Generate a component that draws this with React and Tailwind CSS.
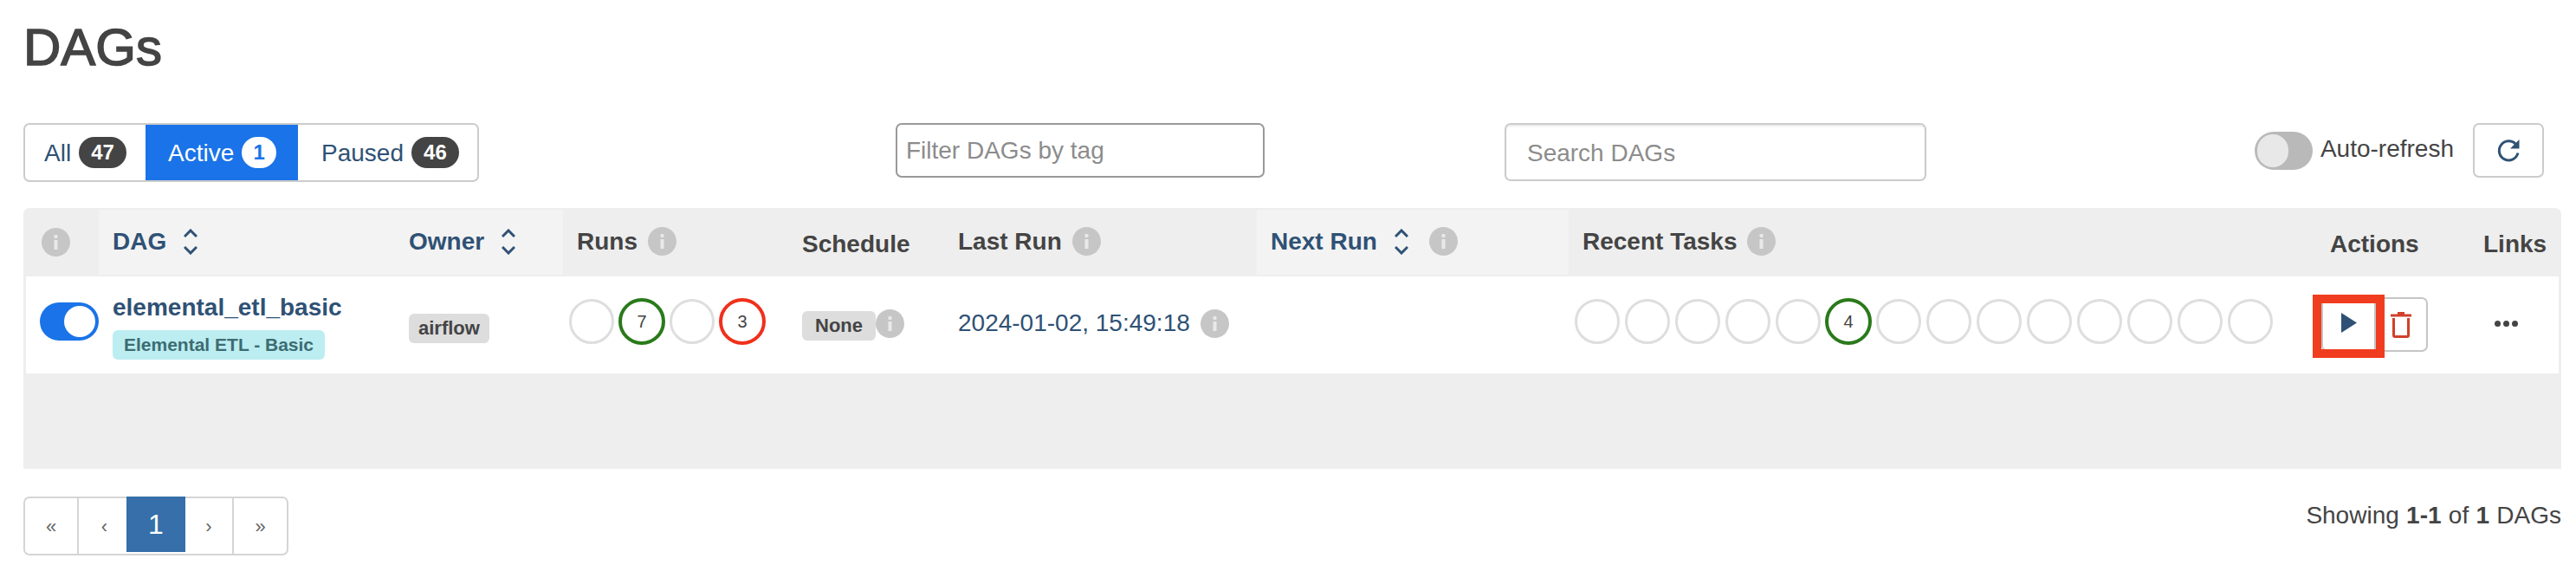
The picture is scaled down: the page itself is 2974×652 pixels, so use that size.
import React from 'react';

const sans = "font-['Liberation_Sans',Arial,sans-serif]";

function InfoIcon({ className = '' }) {
  return (
    <svg viewBox="0 0 33 33" className={`w-[33px] h-[33px] shrink-0 ${className}`}>
      <circle cx="16.5" cy="16.5" r="16.5" fill="#c6c6c6" />
      <rect x="14.5" y="14" width="4" height="11" fill="#e9e9e9" />
      <rect x="14.5" y="8" width="4" height="4" rx="1" fill="#e9e9e9" />
    </svg>
  );
}

function SortIcon() {
  return (
    <svg viewBox="0 0 16 30" className="w-[16px] h-[30px] shrink-0" fill="none" stroke="#2f5175" strokeWidth="3">
      <path d="M1 9l7-7 7 7" />
      <path d="M1 21l7 7 7-7" />
    </svg>
  );
}

function Circle({ value, tone, className = '' }) {
  if (tone === 'green' || tone === 'red') {
    return (
      <div className={`w-[54px] h-[54px] rounded-full border-[4px] flex items-center justify-center text-[20px] text-[#444] bg-white ${tone === 'green' ? 'border-[#2a7a1b]' : 'border-[#f0301c]'} ${className}`}>
        {value}
      </div>
    );
  }
  return <div className={`w-[52px] h-[52px] rounded-full border-[3px] border-[#dedede] bg-white ${className}`} />;
}

function Tab({ label, count, active, className = '' }) {
  return (
    <div className={`flex items-center gap-[9px] h-full ${active ? 'bg-[#1a73e8] text-white' : 'text-[#2f5175]'} ${className}`}>
      <span className="pt-[2px]">{label}</span>
      <span className={`h-[36px] rounded-[18px] flex items-center justify-center text-[24px] font-bold ${active ? 'bg-white text-[#1a73e8] w-[40px]' : 'bg-[#444] text-white w-[55px]'}`}>
        {count}
      </span>
    </div>
  );
}

function PageCell({ children, className = '' }) {
  return <div className={`h-full flex items-center justify-center text-[#666] ${className}`}>{children}</div>;
}

const columns = 'grid grid-cols-[84px_342px_194px_260px_180px_361px_360px_863px_177px_103px]';

export default function App() {
  const tasks = ['', '', '', '', '', '4', '', '', '', '', '', '', '', ''];

  return (
    <div className={`${sans} w-[2974px] h-[652px] bg-white text-[#444] text-[28px] overflow-hidden`}>
      <h1 className="pl-[27px] pt-[25px] h-[142px] text-[60px] leading-[60px] font-normal [-webkit-text-stroke:1.5px_#444]">DAGs</h1>

      {/* Filters */}
      <div className="flex items-start pl-[27px] pr-[37px] h-[98px]">
        <div className="flex items-center w-[526px] h-[68px] border-2 border-[#ccc] rounded-[7px] relative">
          <Tab label="All" count="47" className="w-[141px] pl-[24px] -ml-[2px] rounded-l-[7px]" />
          <Tab label="Active" count="1" active className="w-[176px] pl-[26px] h-[68px]" />
          <Tab label="Paused" count="46" className="pl-[27px]" />
        </div>
        <div className="ml-[481px] w-[426px] h-[63px] border-2 border-[#999] rounded-[7px] flex items-center pl-[10px] text-[#8c8c8c]">
          Filter DAGs by tag
        </div>
        <div className="ml-[277px] w-[487px] h-[67px] border-2 border-[#ccc] rounded-[7px] shadow-[inset_0_2px_2px_rgba(0,0,0,0.08)] flex items-center pl-[24px] pt-[2px] text-[#8c8c8c]">
          Search DAGs
        </div>
        <div className="ml-[379px] w-[67px] h-[44px] mt-[10px] rounded-full bg-[#b9b9b9] flex items-center pl-[3px]">
          <div className="w-[36px] h-[38px] rounded-full bg-[#e8e8e8]" />
        </div>
        <span className="ml-[9px] mt-[12px] leading-[36px]">Auto-refresh</span>
        <div className="ml-[22px] w-[82px] h-[63px] border-2 border-[#ccc] rounded-[7px] flex items-center justify-center">
          <svg viewBox="0 0 28 28" className="w-[28px] h-[28px]" fill="none">
            <path d="M22.5 6.5A11 11 0 1 0 25 16.5" stroke="#2f5175" strokeWidth="3" />
            <path d="M16 11.5L26.5 11.5L26.5 1z" fill="#2f5175" />
          </svg>
        </div>
      </div>

      {/* Table */}
      <div className="ml-[27px] w-[2930px] h-[301px] bg-[#eee] rounded-t-[7px] px-[3px]">
        <div className={`${columns} h-[79px] font-bold`}>
          <div className="flex items-center pl-[18px]"><InfoIcon /></div>
          <div className="flex items-center gap-[20px] pl-[16px] pb-[2px] my-[2px] bg-[#f3f3f3] text-[#2f5175]">DAG <SortIcon /></div>
          <div className="flex items-center gap-[20px] pl-[16px] pb-[2px] my-[2px] bg-[#f3f3f3] text-[#2f5175]">Owner <SortIcon /></div>
          <div className="flex items-center gap-[12px] pl-[16px] pb-[2px]">Runs <InfoIcon /></div>
          <div className="flex items-center pl-[16px] pt-[4px]">Schedule</div>
          <div className="flex items-center gap-[12px] pl-[16px] pb-[2px]">Last Run <InfoIcon /></div>
          <div className="flex items-center gap-[20px] pl-[16px] pb-[2px] my-[2px] bg-[#f3f3f3] text-[#2f5175]">Next Run <SortIcon /><span className="ml-[4px]"><InfoIcon /></span></div>
          <div className="flex items-center gap-[12px] pl-[16px] pb-[2px]">Recent Tasks <InfoIcon /></div>
          <div className="flex items-center pl-[16px] pt-[4px]">Actions</div>
          <div className="flex items-center pl-[16px] pt-[4px]">Links</div>
        </div>

        <div className={`${columns} h-[112px] bg-white`}>
          <div className="flex items-center pl-[16px] pb-[9px]">
            <div className="w-[68px] h-[44px] rounded-full bg-[#1a73e8] flex items-center justify-end pr-[4px]">
              <div className="w-[36px] h-[36px] rounded-full bg-white" />
            </div>
          </div>
          <div className="pl-[16px] pt-[18px]">
            <div className="font-bold text-[#2f5175] leading-[36px]">elemental_etl_basic</div>
            <span className="inline-block mt-[8px] h-[34px] px-[13px] rounded-[6px] bg-[#bcedf1] text-[#3c6c72] text-[21px] font-bold leading-[34px]">Elemental ETL - Basic</span>
          </div>
          <div className="pl-[16px] pt-[37px]">
            <span className="inline-block h-[34px] px-[11px] rounded-[6px] bg-[#ddd] text-[22px] font-bold leading-[34px]">airflow</span>
          </div>
          <div className="flex items-center gap-[5px] pl-[7px] pb-[8px]">
            <Circle />
            <Circle value="7" tone="green" />
            <Circle />
            <Circle value="3" tone="red" />
          </div>
          <div className="flex items-start pl-[16px] pt-[40px]">
            <span className="h-[34px] px-[15px] rounded-[6px] bg-[#ddd] text-[22px] font-bold leading-[34px]">None</span>
            <InfoIcon className="-mt-[2px]" />
          </div>
          <div className="flex items-center gap-[12px] pl-[16px] pb-[4px] text-[#2f5175]">
            2024-01-02, 15:49:18 <InfoIcon />
          </div>
          <div />
          <div className="flex items-center gap-[6px] pl-[7px] pb-[8px]">
            {tasks.map((t, i) => (
              <Circle key={i} value={t} tone={t ? 'green' : undefined} className={t ? '-mx-[1px]' : ''} />
            ))}
          </div>
          <div className="flex items-start pl-[6px] pt-[24px] relative">
            <div className="w-[63px] h-[63px] border-2 border-[#c5c5c5] rounded-l-[7px] flex items-center justify-center">
              <svg viewBox="0 0 18 23" className="w-[18px] h-[23px] -mt-[4px]"><path d="M0 0l18 11.5L0 23z" fill="#2f5175" /></svg>
            </div>
            <div className="w-[62px] h-[63px] -ml-[2px] border-2 border-[#c5c5c5] rounded-r-[7px] flex items-center justify-center">
              <svg viewBox="0 0 24 30" className="w-[24px] h-[30px]" fill="none">
                <path d="M0 4h24" stroke="#d0402b" strokeWidth="3" />
                <path d="M8 1.5h8" stroke="#d0402b" strokeWidth="3" />
                <path d="M3.5 7v20a1.5 1.5 0 0 0 1.5 1.5h14a1.5 1.5 0 0 0 1.5-1.5V7" stroke="#d0402b" strokeWidth="3" />
              </svg>
            </div>
            {/* highlight drawn over the play button */}
            <div className="absolute left-[-4px] top-[21px] w-[83px] h-[73px] border-[10px] border-[#f03c1f]" />
          </div>
          <div className="flex items-center pl-[29px] pb-[4px] gap-[3px]">
            <span className="w-[7px] h-[7px] rounded-full bg-[#444]" />
            <span className="w-[7px] h-[7px] rounded-full bg-[#444]" />
            <span className="w-[7px] h-[7px] rounded-full bg-[#444]" />
          </div>
        </div>
      </div>

      {/* Pagination */}
      <div className="flex items-start justify-between pl-[27px] pr-[17px] mt-[32px]">
        <div className="flex w-[306px] h-[68px] border-2 border-[#d5d5d5] rounded-[7px] text-[22px]">
          <PageCell className="w-[62px] border-r-2 border-[#d5d5d5]">«</PageCell>
          <PageCell className="w-[55px] pl-[4px]">‹</PageCell>
          <PageCell className="w-[68px] -my-[2px] h-[68px] bg-[#366fa9] text-white text-[32px]">1</PageCell>
          <PageCell className="w-[56px] border-r-2 border-[#d5d5d5]">›</PageCell>
          <PageCell className="w-[61px]">»</PageCell>
        </div>
        <div className="pt-[4px] leading-[36px] [word-spacing:0.5px]">Showing <b>1-1</b> of <b>1</b> DAGs</div>
      </div>
    </div>
  );
}
